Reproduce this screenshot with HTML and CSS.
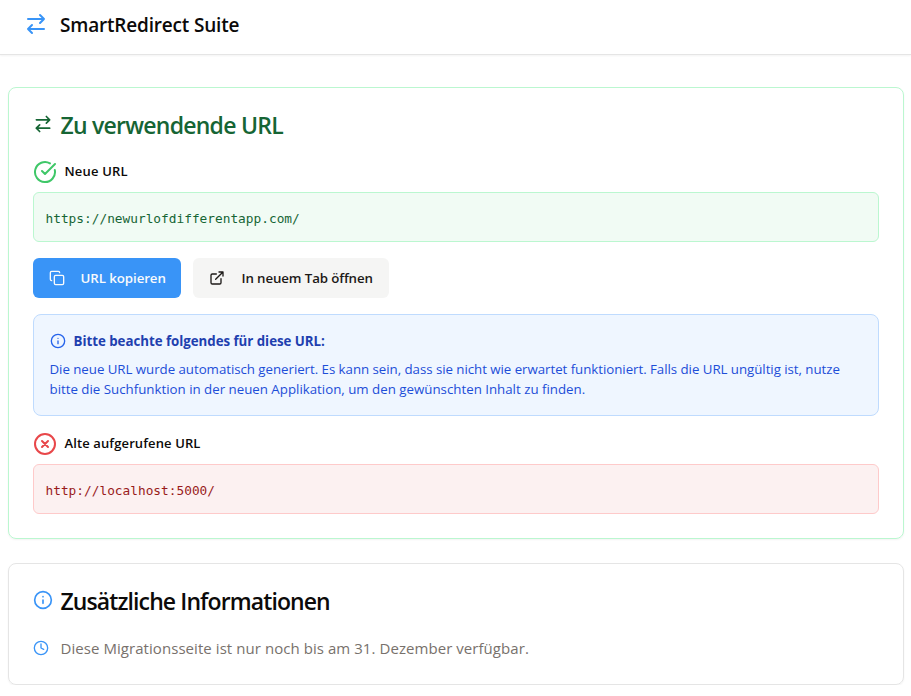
FILE: index.html
```
<!DOCTYPE html>
<html lang="de">
<head>
<meta charset="utf-8">
<title>SmartRedirect Suite</title>
<link rel="stylesheet" href="styles.css">
</head>
<body>
<header class="topbar">
  <svg class="icon icon-24 brand" viewBox="0 0 24 24"><path d="m16 3 4 4-4 4M20 7H4M8 21l-4-4 4-4M4 17h16"/></svg>
  <h1 class="app-title">SmartRedirect Suite</h1>
</header>
<main class="page">
  <section class="card card-success">
    <div class="card-head">
      <svg class="icon icon-20" viewBox="0 0 24 24"><path d="m16 3 4 4-4 4M20 7H4M8 21l-4-4 4-4M4 17h16"/></svg>
      <h2 class="card-title title-url">Zu verwendende URL</h2>
    </div>
    <div class="label-row">
      <svg class="icon icon-24 ok" viewBox="0 0 24 24"><path d="M21.801 10A10 10 0 1 1 17 3.335M9 11l3 3L22 4"/></svg>
      <h3 class="label label-new">Neue URL</h3>
    </div>
    <div class="url-box url-new"><code>https://newurlofdifferentapp.com/</code></div>
    <div class="actions">
      <button class="btn btn-primary">
        <svg class="icon icon-16" viewBox="0 0 24 24"><rect x="8" y="8" width="14" height="14" rx="2"/><path d="M4 16c-1.1 0-2-.9-2-2V4c0-1.1.9-2 2-2h10c1.1 0 2 .9 2 2"/></svg>
        <span>URL kopieren</span>
      </button>
      <button class="btn btn-secondary">
        <svg class="icon icon-16" viewBox="0 0 24 24"><path d="M15 3h6v6M10 14 21 3M18 13v6a2 2 0 0 1-2 2H5a2 2 0 0 1-2-2V8a2 2 0 0 1 2-2h6"/></svg>
        <span>In neuem Tab öffnen</span>
      </button>
    </div>
    <div class="notice">
      <h4 class="notice-title">
        <svg class="icon icon-16" viewBox="0 0 24 24"><circle cx="12" cy="12" r="10"/><path d="M12 16v-4M12 8h.01"/></svg>
        <span>Bitte beachte folgendes für diese URL:</span>
      </h4>
      <p class="notice-text">Die neue URL wurde automatisch generiert. Es kann sein, dass sie nicht wie erwartet funktioniert. Falls die URL ungültig ist, nutze<br><span class="line-2">bitte die Suchfunktion in der neuen Applikation, um den gewünschten Inhalt zu finden.</span></p>
    </div>
    <div class="label-row">
      <svg class="icon icon-24 bad" viewBox="0 0 24 24"><circle cx="12" cy="12" r="10"/><path d="m15 9-6 6M9 9l6 6"/></svg>
      <h3 class="label label-old">Alte aufgerufene URL</h3>
    </div>
    <div class="url-box url-old"><code>http://localhost:5000/</code></div>
  </section>
  <section class="card card-info">
    <div class="card-head">
      <svg class="icon icon-20 brand" viewBox="0 0 24 24"><circle cx="12" cy="12" r="10"/><path d="M12 16v-4M12 8h.01"/></svg>
      <h2 class="card-title title-info">Zusätzliche Informationen</h2>
    </div>
    <div class="info-row">
      <svg class="icon icon-16 brand" viewBox="0 0 24 24"><circle cx="12" cy="12" r="10"/><path d="M12 6v6l4 2"/></svg>
      <span class="info-text">Diese Migrationsseite ist nur noch bis am 31. Dezember verfügbar.</span>
    </div>
  </section>
</main>
</body>
</html>
```
FILE: styles.css
```
* { box-sizing: border-box; margin: 0; padding: 0; }
body {
  background: #fff;
  color: #0c0a09;
  font-family: "Open Sans", "Noto Sans", sans-serif;
  font-size: 14px;
  line-height: 20px;
}
.icon { flex: none; fill: none; stroke: currentColor; stroke-width: 2; stroke-linecap: round; stroke-linejoin: round; }
.icon-16 { width: 16px; height: 16px; }
.icon-20 { width: 20px; height: 20px; }
.icon-24 { width: 24px; height: 24px; }
.brand { color: #3994f7; }
.ok { color: #3fc768; }
.bad { color: #e8474a; }

.topbar {
  display: flex;
  align-items: flex-start;
  gap: 12px;
  height: 55px;
  padding: 12px 24px 0;
  border-bottom: 1px solid #e5e5e5;
  box-shadow: 0 1px 2px rgba(0, 0, 0, .05);
}
.app-title { font-size: 19px; font-weight: 600; line-height: 27px; letter-spacing: -.19px; }

.page { width: 896px; max-width: 100%; margin: 32px auto 0; display: flex; flex-direction: column; gap: 24px; }
.card { padding: 24px; border: 1px solid #e5e5e5; border-radius: 8px; box-shadow: 0 1px 2px rgba(0, 0, 0, .05); }
.card-success { height: 452px; border-color: #bbf7d0; }
.card-info { height: 122px; }
.card-head { display: flex; align-items: center; gap: 8px; height: 24px; }
.card-title { font-size: 23px; font-weight: 600; line-height: 28px; padding-top: 2px; }
.title-url { letter-spacing: -.75px; }
.title-info { letter-spacing: -.9px; }
.card-success .card-head { color: #166534; }

.label-row { display: flex; align-items: center; gap: 8px; height: 24px; margin: 24px 0 8px; }
.label { font-size: 13px; font-weight: 600; line-height: 20px; padding-bottom: 2px; }
.label-new { letter-spacing: .18px; }
.label-old { letter-spacing: .12px; }
.url-box { display: flex; align-items: center; height: 50px; padding: 3px 12px 0; border: 1px solid; border-radius: 6px; }
.url-box code { font-family: "DejaVu Sans Mono", monospace; font-size: 12.8px; line-height: 20px; }
.url-new { background: #f1fbf4; border-color: #bbf7d0; color: #166534; }
.url-old { background: #fcf1f1; border-color: #fecaca; color: #991b1b; }

.actions { display: flex; gap: 12px; margin: 16px 0; }
.btn { display: flex; align-items: center; gap: 16px; height: 40px; padding: 0 16px; border: 0; border-radius: 6px; font: 600 13.3px/20px "Open Sans", "Noto Sans", sans-serif; white-space: nowrap; }
.btn-primary { width: 148px; background: #3994f7; color: #f8fafc; letter-spacing: -.08px; }
.btn-secondary { width: 196px; gap: 17px; background: #f5f5f4; color: #1c1917; letter-spacing: -.12px; }

.notice { height: 102px; padding: 16px; background: #eff6ff; border: 1px solid #bfdbfe; border-radius: 8px; }
.notice + .label-row { margin-top: 16px; }
.notice-title { display: flex; align-items: center; gap: 8px; height: 20px; margin-bottom: 8px; color: #1e40af; font-size: 13.3px; font-weight: 700; letter-spacing: -.03px; }
.notice-title .icon { color: #2563eb; }
.notice-text { color: #1d4ed8; font-size: 13.3px; letter-spacing: -.045px; white-space: nowrap; }
.line-2 { letter-spacing: -.005px; }

.info-row { display: flex; align-items: center; gap: 12px; height: 24px; margin-top: 24px; color: #78716c; }
.info-text { font-size: 15px; letter-spacing: .06px; }
```
